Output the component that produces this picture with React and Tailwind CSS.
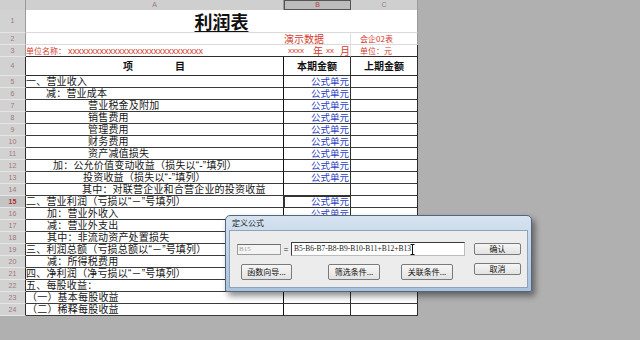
import React from "react";

const CJK = { fontFamily: '"Noto Sans CJK SC", "Noto Sans", sans-serif' };
const MIX = { fontFamily: '"Liberation Sans", "Noto Sans CJK SC", sans-serif' };

// column A text for rows 5..24: [row, text, indent, hasFormula]
const lines = [
  [5, "一、营业收入", 0, true],
  [6, "减：营业成本", 20, true],
  [7, "营业税金及附加", 62, true],
  [8, "销售费用", 62, true],
  [9, "管理费用", 62, true],
  [10, "财务费用", 62, true],
  [11, "资产减值损失", 62, true],
  [12, "加：公允价值变动收益（损失以“-”填列）", 27, true],
  [13, "投资收益（损失以“-”填列）", 57, true],
  [14, "其中：对联营企业和合营企业的投资收益", 56, false],
  [15, "二、营业利润（亏损以“－”号填列）", 0, true],
  [16, "加：营业外收入", 21, true],
  [17, "减：营业外支出", 21, false],
  [18, "其中：非流动资产处置损失", 21, false],
  [19, "三、利润总额（亏损总额以“－”号填列）", 0, false],
  [20, "减：所得税费用", 21, false],
  [21, "四、净利润（净亏损以“－”号填列）", 0, false],
  [22, "五、每股收益：", 0, false],
  [23, "（一）基本每股收益", 1, false],
  [24, "（二）稀释每股收益", 1, false],
];

function RowHead({ n, h, dark, active }) {
  return (
    <div
      className={`w-[26px] shrink-0 flex items-center justify-center border-b border-b-[#e6e6e6] border-r ${dark ? "border-r-[#2e2e2e]" : "border-r-[#9a9a9a]"} ${active ? "bg-[#c4c4c4] text-[#b03030] font-bold" : "bg-[#d2d2d2] text-[#a07878]"} text-[7px] leading-[8px]`}
      style={{ height: h, fontFamily: '"Liberation Sans", sans-serif' }}
    >
      {n}
    </div>
  );
}

function Btn({ children, className = "" }) {
  return (
    <div className={`flex items-center justify-center bg-gradient-to-b from-[#f6f6f6] to-[#e2e2e2] border border-[#7a7a7a] rounded-[2px] text-[8px] leading-[10px] text-[#111] ${className}`}>
      {children}
    </div>
  );
}

function Dialog() {
  return (
    <div className="absolute left-[225px] top-[215px] w-[307px] h-[77px] rounded-t-[5px] rounded-b-[2px] border border-[#52667e] bg-gradient-to-b from-[#d6e3f0] via-[#bfd2e7] to-[#aac2dc] shadow-[3px_4px_6px_rgba(0,0,0,0.45)] flex flex-col" style={CJK}>
      <div className="h-[14px] pl-[6px] flex items-center text-[8px] leading-[10px] text-[#1a1a1a]">定义公式</div>
      <div className="mx-[3px] mb-[3px] flex-1 bg-[#ececec] border border-[#8ea3ba] flex pl-[7px] pt-[11px]">
        <div className="w-[228px] flex flex-col">
          <div className="flex items-center h-[14px]">
            <div className="w-[44px] h-[11px] bg-[#f4f4f4] border border-[#9c9c9c] border-t-[#6e6e6e] text-[7px] text-[#a0a0a0] leading-[9px] pl-[1px]" style={{ fontFamily: '"Liberation Serif", serif' }}>B15</div>
            <div className="w-[10px] text-center text-[8px] leading-[10px] text-[#222]">=</div>
            <div className="relative w-[174px] h-[14px] bg-white border border-[#3a3a3a] border-r-[#bcbcbc] border-b-[#bcbcbc] text-[7.5px] leading-[12px] pl-[2px] text-[#1a1a1a]" style={{ fontFamily: '"Liberation Serif", serif' }}>
              B5-B6-B7-B8-B9-B10-B11+B12+B13
              <svg className="absolute left-[118px] top-[1px]" width="5" height="11" viewBox="0 0 5 11">
                <path d="M0.5 0.5h4M0.5 10.5h4M2.5 0.5v10" stroke="#111" strokeWidth="1" fill="none" />
              </svg>
            </div>
          </div>
          <div className="flex mt-[8px]">
            <Btn className="ml-[4px] w-[51px] h-[16px]">函数向导...</Btn>
            <Btn className="ml-[36px] w-[52px] h-[16px]">筛选条件...</Btn>
            <Btn className="ml-[21px] w-[52px] h-[16px]">关联条件...</Btn>
          </div>
        </div>
        <div className="ml-[9px] pt-[1px] flex flex-col gap-[8px]">
          <Btn className="w-[47px] h-[12px] border-[#3c3c3c]">确认</Btn>
          <Btn className="w-[47px] h-[12px]">取消</Btn>
        </div>
      </div>
    </div>
  );
}

export default function App() {
  const red = "text-[#d63a2c]";
  return (
    <div className="relative w-[640px] h-[340px] overflow-hidden bg-[#b0b0b0]" style={CJK}>
      {/* column headers */}
      <div className="flex h-[10px] text-[7px] leading-[8px] text-[#9a7878]" style={{ fontFamily: '"Liberation Sans", sans-serif' }}>
        <div className="w-[26px] bg-[#cfcfcf] border-r border-[#9a9a9a]" />
        <div className="w-[258px] bg-[#cfcfcf] border-r border-[#9a9a9a] flex items-center justify-center">A</div>
        <div className="w-[67px] bg-[#bcbcbc] border border-[#555] flex items-center justify-center text-[#b04040]">B</div>
        <div className="w-[67px] bg-[#cfcfcf] border-r border-[#9a9a9a] flex items-center justify-center">C</div>
      </div>

      {/* row 1 */}
      <div className="flex">
        <RowHead n={1} h={23} />
        <div className="w-[392px] h-[23px] bg-white border-b border-[#dadada] border-r border-r-[#9a9a9a] flex items-end justify-center">
          <span className="text-[18px] leading-[21px] font-bold underline underline-offset-2 text-[#111]">利润表</span>
        </div>
      </div>

      {/* row 2 */}
      <div className="flex">
        <RowHead n={2} h={12} />
        <div className="w-[258px] h-[12px] bg-white border-b border-[#dadada]" />
        <div className={`w-[67px] h-[12px] bg-white border-b border-[#dadada] border-r border-r-[#e0e0e0] text-[10px] leading-[11px] ${red}`}>演示数据</div>
        <div className={`w-[67px] h-[12px] bg-white border-b border-[#dadada] border-r border-r-[#9a9a9a] text-[8px] leading-[11px] pl-[9px] ${red}`}>会企02表</div>
      </div>

      {/* row 3 */}
      <div className="flex">
        <RowHead n={3} h={12} />
        <div className={`w-[258px] h-[12px] bg-white border-b border-[#2e2e2e] flex items-end leading-[10px] ${red}`}>
          <span className="text-[8px]">单位名称：</span>
          <span className="text-[9px] ml-[2px]" style={{ fontFamily: '"Liberation Sans", sans-serif' }}>xxxxxxxxxxxxxxxxxxxxxxxxxxxxxx</span>
        </div>
        <div className={`w-[67px] h-[12px] bg-white border-b border-[#2e2e2e] border-r border-r-[#e0e0e0] flex items-end leading-[10px] pl-[4px] ${red}`}>
          <span className="text-[8px]" style={{ fontFamily: '"Liberation Sans", sans-serif' }}>xxxx</span>
          <span className="text-[10px] ml-[9px]">年</span>
          <span className="text-[8px] ml-[3px]" style={{ fontFamily: '"Liberation Sans", sans-serif' }}>xx</span>
          <span className="text-[10px] ml-[6px]">月</span>
        </div>
        <div className={`w-[67px] h-[12px] bg-white border-b border-[#2e2e2e] border-r border-r-[#2e2e2e] text-[8px] leading-[11px] pl-[9px] ${red}`}>单位：元</div>
      </div>

      {/* row 4 header */}
      <div className="flex">
        <RowHead n={4} h={19} dark />
        <div className="w-[258px] h-[19px] bg-white border-b border-[#2e2e2e] border-r border-r-[#111] flex items-center text-[10px] leading-[12px] font-bold text-[#111]">
          <span className="ml-[97px]">项</span>
          <span className="ml-[42px]">目</span>
        </div>
        <div className="w-[67px] h-[19px] bg-white border-b border-[#2e2e2e] border-r border-r-[#2e2e2e] flex items-center justify-center text-[10px] leading-[12px] font-bold text-[#111]">本期金额</div>
        <div className="w-[67px] h-[19px] bg-white border-b border-[#2e2e2e] border-r border-r-[#2e2e2e] flex items-center justify-center text-[10px] leading-[12px] font-bold text-[#111]">上期金额</div>
      </div>

      {/* rows 5..24 */}
      {lines.map(([n, text, indent, formula]) => (
        <div key={n} className="flex">
          <RowHead n={n} h={12} dark active={n === 15} />
          <div className="w-[258px] h-[12px] bg-white border-b border-[#3a3a3a] border-r border-r-[#111] text-[10px] leading-[11px] tracking-[0.2px] text-[#161616] whitespace-nowrap" style={{ ...MIX, paddingLeft: indent }}>
            {text}
          </div>
          <div className={`w-[67px] h-[12px] bg-white border-b border-[#3a3a3a] border-r border-r-[#2e2e2e] text-[9.5px] leading-[11px] text-right pr-[1px] text-[#2a3fc4] ${n === 15 ? "outline-2 outline-[#333] -outline-offset-1" : ""}`}>
            {formula ? "公式单元" : ""}
          </div>
          <div className="w-[67px] h-[12px] bg-white border-b border-[#3a3a3a] border-r border-r-[#2e2e2e]" />
        </div>
      ))}

      <Dialog />
    </div>
  );
}
